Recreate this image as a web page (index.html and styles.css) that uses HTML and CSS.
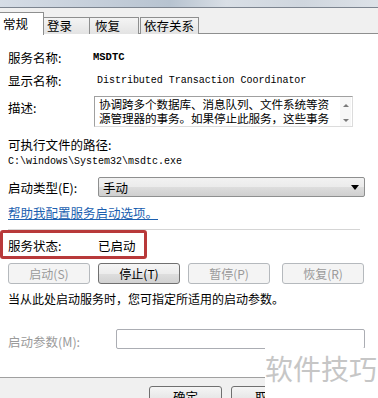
FILE: index.html
```html
<!DOCTYPE html>
<html>
<head>
<meta charset="utf-8">
<link rel="stylesheet" href="styles.css">
</head>
<body>
<div class="dialog">
  <div class="titlebar"></div>
  <div class="tabstrip">
    <div class="tab active">常规</div>
    <div class="tab t2">登录</div>
    <div class="tab t3">恢复</div>
    <div class="tab t4">依存关系</div>
  </div>
  <div class="content">
    <div class="row r-name"><span class="label">服务名称:</span><span class="mono val-name">MSDTC</span></div>
    <div class="row r-disp"><span class="label">显示名称:</span><span class="mono val-disp">Distributed Transaction Coordinator</span></div>
    <div class="row r-desc">
      <span class="label desc-label">描述:</span>
      <div class="textarea">
        <div class="ta-text">协调跨多个数据库、消息队列、文件系统等资<br>源管理器的事务。如果停止此服务，这些事务</div>
        <div class="ta-scroll"><span class="up"></span><span class="down"></span></div>
      </div>
    </div>
    <div class="line-label r-path">可执行文件的路径:</div>
    <div class="line-label mono path">C:\windows\System32\msdtc.exe</div>
    <div class="row r-type">
      <span class="label type-label">启动类型(E):</span>
      <div class="select"><span>手动</span><span class="arrow"></span></div>
    </div>
    <div class="line-label link">帮助我配置服务启动选项。</div>
    <div class="hr"></div>
    <div class="row r-status"><span class="label">服务状态:</span><span class="status-val">已启动</span></div>
    <div class="buttons">
      <div class="btn disabled">启动(S)</div>
      <div class="btn enabled">停止(T)</div>
      <div class="btn disabled">暂停(P)</div>
      <div class="btn disabled b4">恢复(R)</div>
    </div>
    <div class="line-label hint">当从此处启动服务时，您可指定所适用的启动参数。</div>
    <div class="row r-param">
      <span class="label param-label">启动参数(M):</span>
      <div class="input"></div>
    </div>
  </div>
  <div class="footer">
    <div class="fbtn">确定</div>
    <div class="fbtn">取消</div>
  </div>
  <div class="redbox"></div>
  <div class="watermark">软件技巧</div>
</div>
</body>
</html>
```

FILE: styles.css
```css
html, body {
  margin: 0;
  padding: 0;
  background: #ffffff;
}
.dialog {
  position: relative;
  width: 378px;
  height: 398px;
  overflow: hidden;
  font-family: "Noto Sans CJK SC", "Noto Sans", sans-serif;
  font-size: 12px;
  color: #000;
  background: #fff;
}
.titlebar {
  height: 7px;
  background: linear-gradient(90deg, #d6dde6 0%, #c2ccd8 30%, #b7c3d0 45%, #d9dfe6 60%, #cfd6de 80%, #dde2e8 100%);
  border-bottom: 1px solid #7d8590;
}
.tabstrip {
  height: 25px;
  background: #f0f0f0;
  border-bottom: 1px solid #8e8f8f;
  display: flex;
  align-items: flex-end;
  position: relative;
}
.tab {
  height: 16px;
  line-height: 16px;
  margin-bottom: -1px;
  border: 1px solid #8e8f8f;
  border-bottom: none;
  background: linear-gradient(#f4f4f4, #e3e3e3);
  padding: 0 3px;
  font-size: 12.5px;
  box-sizing: content-box;
}
.tab.active {
  height: 21px;
  line-height: 22px;
  background: #fff;
  width: 38px;
  border-left: none;
  padding: 0 2px 1px 3px;
  margin-bottom: -2px;
  position: relative;
  z-index: 2;
}
.tab.t2 { width: 39px; padding-left: 3px; border-left: none; }
.tab.t3 { width: 40px; padding-left: 5px; border-left: none; }
.tab.t4 { width: 51px; padding-left: 3px; margin-left: 1px; border-left: 1px solid #8e8f8f; }

.content {
  padding: 13px 0 0 8px;
  display: flex;
  flex-direction: column;
}
.row {
  display: flex;
  align-items: center;
}
.label {
  width: 86px;
  flex: none;
  white-space: nowrap;
}
.mono {
  font-family: "Liberation Mono", "DejaVu Sans Mono", monospace;
  font-size: 10px;
}
.r-name { height: 20px; }
.val-name { font-weight: bold; font-size: 10.5px; margin-left: -1px; }
.r-disp { height: 20px; margin-top: 3px; }
.val-disp { margin-left: 3px; letter-spacing: -0.02px; }
.r-desc {
  margin-top: 6px;
  align-items: flex-start;
  height: 32px;
}
.desc-label { margin-top: 4px; line-height: 16px; }
.textarea {
  width: 259px;
  height: 31px;
  border: 1px solid #a0a0a0;
  border-right-color: #dcdcdc;
  border-bottom-color: #dcdcdc;
  display: flex;
  box-sizing: border-box;
}
.ta-text {
  flex: 1;
  min-width: 0;
  padding: 0 0 0 4px;
  font-size: 11.6px;
  line-height: 14px;
  letter-spacing: -0.1px;
  white-space: nowrap;
  overflow: hidden;
}
.ta-scroll {
  width: 11px;
  flex: none;
  margin-right: 1px;
  display: flex;
  flex-direction: column;
  justify-content: space-between;
  align-items: center;
  padding: 7px 0 4px;
  box-sizing: border-box;
  background: #f7f7f7;
}
.up, .down {
  width: 0;
  height: 0;
  border-left: 3px solid transparent;
  border-right: 3px solid transparent;
}
.up { border-bottom: 3px solid #7a7a7a; }
.down { border-top: 3px solid #7a7a7a; }

.line-label {
  height: 16px;
  line-height: 16px;
  white-space: nowrap;
}
.r-path { margin-top: 9px; font-size: 12.5px; }
.path { margin-top: 1px; }
.r-type { margin-top: 7px; height: 20px; }
.type-label { width: 90px; font-size: 12.5px; }
.select {
  width: 267px;
  height: 20px;
  box-sizing: border-box;
  border: 1px solid #8e8f8f;
  border-radius: 2px;
  background: linear-gradient(#f2f2f2 0%, #ebebeb 50%, #dddddd 51%, #cfcfcf 100%);
  display: flex;
  align-items: center;
  justify-content: space-between;
  padding: 0 5px 0 4px;
  font-size: 12.5px;
}
.arrow {
  width: 0;
  height: 0;
  border-left: 4px solid transparent;
  border-right: 4px solid transparent;
  border-top: 5px solid #000;
}
.link {
  margin-top: 8px;
  color: #1b5fb0;
  text-decoration: underline;
  font-size: 12.5px;
}
.hr {
  margin-top: 8px;
  width: 352px;
  height: 1px;
  background: #d5d5d5;
}
.r-status { margin-top: 5px; height: 20px; }
.label, .status-val { font-size: 12.5px; }
.status-val { margin-left: 4px; }
.buttons {
  display: flex;
  margin-top: 8px;
  gap: 8px;
}
.btn {
  width: 82px;
  height: 21px;
  box-sizing: border-box;
  border-radius: 3px;
  text-align: center;
  line-height: 19px;
  font-size: 12px;
}
.btn.disabled {
  border: 1px solid #b5b9bd;
  background: #f4f4f4;
  color: #9a9a9a;
}
.btn.enabled {
  border: 1px solid #707070;
  background: linear-gradient(#f5f5f5 0%, #ececec 50%, #dedede 51%, #d2d2d2 100%);
  color: #000;
}
.btn.b4 { margin-left: 4px; }
.hint { margin-top: 7px; }
.r-param { margin-top: 22px; height: 20px; }
.param-label { width: 108px; color: #9a9a9a; margin-top: 5px; }
.input {
  width: 249px;
  height: 20px;
  box-sizing: border-box;
  border: 1px solid #abadb3;
  border-radius: 2px;
  background: #fff;
}
.footer {
  position: absolute;
  left: 0;
  right: 0;
  top: 377px;
  bottom: 0;
  border-top: 1px solid #a0a0a0;
  background: #f0f0f0;
  display: flex;
  padding: 8px 0 0 149px;
  gap: 9px;
  box-sizing: border-box;
}
.fbtn {
  width: 73px;
  height: 22px;
  box-sizing: border-box;
  border: 1px solid #707070;
  border-radius: 3px;
  background: linear-gradient(#f5f5f5, #dcdcdc);
  text-align: center;
  line-height: 20px;
  font-size: 12.5px;
}
.redbox {
  position: absolute;
  left: 0;
  top: 230px;
  width: 147px;
  height: 29px;
  box-sizing: border-box;
  border: 3px solid #b8393a;
  border-radius: 3px;
}
.watermark {
  position: absolute;
  left: 265px;
  top: 348px;
  width: 113px;
  height: 50px;
  background: #fff;
  color: #c6c6c6;
  font-size: 28px;
  line-height: 36px;
  padding-top: 2px;
  box-sizing: border-box;
  white-space: nowrap;
}
```
